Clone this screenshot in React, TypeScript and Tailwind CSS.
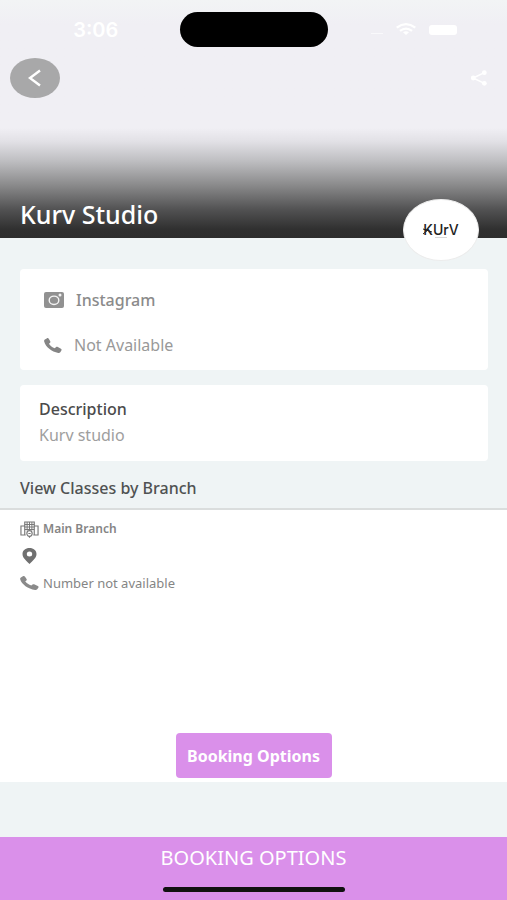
import React from "react";

type IconProps = { className?: string };

function BackIcon({ className }: IconProps) {
  return (
    <svg viewBox="0 0 14 18" className={className} fill="none" stroke="currentColor" strokeWidth="2.4" aria-hidden="true">
      <path d="M12 1.5 2 9l10 7.5" />
    </svg>
  );
}

function ShareIcon({ className }: IconProps) {
  return (
    <svg viewBox="0 0 20 18" className={className} fill="currentColor" aria-hidden="true">
      <path d="M3.5 9 16 3M3.5 9 16 15" stroke="currentColor" strokeWidth="1.6" />
      <circle cx="3.5" cy="9" r="2.700" />
      <circle cx="16" cy="3" r="2.700" />
      <circle cx="16" cy="15" r="2.700" />
    </svg>
  );
}

function WifiIcon({ className }: IconProps) {
  return (
    <svg viewBox="0 0 22 14" className={className} fill="none" stroke="currentColor" strokeWidth="2.4" aria-hidden="true">
      <path d="M1 5Q11-2.500 21 5M4.500 8.500q6.500-5 13 0" />
      <path d="m11 13-3.200-3Q11 8 14.200 10Z" fill="currentColor" stroke="none" />
    </svg>
  );
}

function CameraIcon({ className }: IconProps) {
  return (
    <svg viewBox="0 0 20 16" className={className} aria-hidden="true">
      <rect width="20" height="16" rx="2" fill="currentColor" />
      <ellipse cx="10" cy="8.300" rx="4.800" ry="4.200" fill="none" stroke="#f4f4f4" strokeWidth="1.400" />
      <circle cx="16" cy="3" r="1.500" fill="#f4f4f4" />
    </svg>
  );
}

function PhoneIcon({ className }: IconProps) {
  return (
    <svg viewBox="0 0 20 16" className={className} preserveAspectRatio="none" fill="currentColor" aria-hidden="true">
      <path d="M1 1.600 3 .400c.9-.5 1.800-.3 2.300.5l1.600 2.600c.4.700.2 1.300-.4 1.800l-1 .8c1.600 2.300 3.700 3.900 6.400 4.700l1.300-1c.7-.5 1.400-.5 2.200-.1l3.400 1.800c.8.500 1 1.200.5 1.900l-1.200 1.700c-.5.700-1.300 1-2.200.8C8.500 14.800 1.700 9.500.2 3.700c-.2-.9 0-1.600.8-2.100Z" />
    </svg>
  );
}

function BuildingIcon({ className }: IconProps) {
  return (
    <svg viewBox="0 0 20 17" className={className} preserveAspectRatio="none" fill="none" stroke="currentColor" strokeWidth="1.200" aria-hidden="true">
      <path d="M5 13.500V1h10v12.500M5 5H1v9h5M15 5h4v9h-5" />
      <path d="M7.500 1v8.500M10 1v8M12.500 1v8.500M5 3.500h10M5 6h10M5 8.500h10" strokeWidth="1" />
      <circle cx="10" cy="12.500" r="2.800" fill="#ffffff" />
      <path d="M8.800 12.500h2.400M10 15.300v1.500" />
    </svg>
  );
}

function PinIcon({ className }: IconProps) {
  return (
    <svg viewBox="0 0 14 16" className={className} fill="currentColor" aria-hidden="true">
      <path fillRule="evenodd" d="M7 0c4 0 7 2.500 7 6 0 3.800-3.500 6.500-7 10C3.500 12.500 0 9.800 0 6c0-3.500 3-6 7-6Zm0 3.500a2.700 2.500 0 1 0 0 5 2.700 2.500 0 0 0 0-5Z" />
    </svg>
  );
}

function Logo() {
  return (
    <div className="absolute top-[199px] right-7 flex h-[62px] w-[76px] items-center justify-center rounded-[50%] border border-[#ececec] bg-white">
      <span className="relative font-[Inter,sans-serif] text-sm leading-4 font-medium text-[#222222]">
        KUrV
        <svg viewBox="0 0 36 16" className="absolute inset-0 h-4 w-9" fill="none" aria-hidden="true">
          <path d="m0 7 9 3M0 12l5-4" stroke="#222222" />
          <path d="M12 15.500h12" stroke="#d8d8d8" />
        </svg>
      </span>
    </div>
  );
}

function Hero() {
  return (
    <header className="relative flex h-[238px] flex-col bg-linear-to-b from-[#f2f4f5] via-[#f0eff4] via-10% to-[#f0eff4] text-white">
      <div className="absolute inset-x-0 bottom-0 h-[110px] bg-[linear-gradient(to_bottom,#f0eff4_0%,#e2e1e6_12%,#bebec1_30%,#8a8a8b_52%,#525253_74%,#303030_92%,#2d2d2d_100%)]" />
      <div className="relative grid grid-cols-[1fr_148px_1fr] items-center pt-3">
        <time className="pl-3 text-center font-[Inter,sans-serif] text-xl leading-5 font-semibold">3:06</time>
        <div className="h-[35px] rounded-full bg-black" />
        <div className="flex items-center justify-end gap-3 pr-[50px]">
          <span className="mt-2 h-px w-3 bg-white/60" />
          <WifiIcon className="h-[13px] w-[22px]" />
          <span className="h-[10px] w-7 rounded-[3px] bg-white" />
        </div>
      </div>
      <div className="relative mt-[11px] flex items-center justify-between pr-[18px] pl-[10px]">
        <button type="button" aria-label="Back" className="flex h-10 w-[50px] items-center justify-center rounded-[50%] bg-[#a8a8a9]">
          <BackIcon className="h-[18px] w-[14px]" />
        </button>
        <button type="button" aria-label="Share">
          <ShareIcon className="h-4 w-5" />
        </button>
      </div>
      <h1 className="relative mt-auto px-5 pb-2 text-[25px] leading-8 font-medium">Kurv Studio</h1>
      <Logo />
    </header>
  );
}

export default function App() {
  return (
    <div className="flex min-h-screen flex-col bg-[#eff4f5] font-['Noto_Sans','Open_Sans',sans-serif]">
      <Hero />
      <main className="flex flex-1 flex-col">
        <div className="mt-[31px] flex flex-col gap-[15px] pr-[19px] pl-5">
          <section className="flex flex-col gap-[21px] rounded bg-white px-6 pt-[19px] pb-[13px] text-base leading-6 text-[#999999]">
            <a href="#instagram" className="flex items-center gap-3 font-medium text-[#8b8b8b]">
              <CameraIcon className="h-4 w-5 text-[#919191]" />
              Instagram
            </a>
            <p className="flex items-center gap-3">
              <PhoneIcon className="h-[15px] w-[18px] text-[#858585]" />
              Not Available
            </p>
          </section>
          <section className="rounded bg-white px-[19px] pt-[11px] pb-[13px] text-base leading-[26px]">
            <h2 className="font-medium text-[#4b4b4b]">Description</h2>
            <p className="text-[#9e9e9e]">Kurv studio</p>
          </section>
        </div>
        <h2 className="px-5 pt-[15px] pb-2 text-base leading-6 font-medium text-[#4f5252]">View Classes by Branch</h2>
        <section className="mb-[55px] flex flex-1 flex-col border-t-2 border-[#dadddd] bg-white pb-1">
          <ul className="flex flex-col gap-[7px] px-5 pt-[9px] leading-5 text-[#858585]">
            <li className="flex items-center gap-1 text-xs leading-5 font-semibold">
              <BuildingIcon className="h-[17px] w-[19px] text-[#777777]" />
              Main Branch
            </li>
            <li className="flex h-5 items-center">
              <PinIcon className="h-4 w-[19px] text-[#707070]" />
            </li>
            <li className="flex items-center gap-1 text-[13px]">
              <PhoneIcon className="h-[14px] w-[19px] text-[#8a8a8a]" />
              Number not available
            </li>
          </ul>
          <button type="button" className="mt-auto h-[45px] w-[156px] self-center rounded bg-[#da90ea] text-base font-bold text-white">
            Booking Options
          </button>
        </section>
      </main>
      <footer className="flex flex-col items-center gap-[15px] bg-[#da90ea] pt-[7px] pb-2">
        <button type="button" className="text-xl leading-7 text-white">BOOKING OPTIONS</button>
        <div className="h-[5px] w-[182px] rounded-full bg-[#111111]" />
      </footer>
    </div>
  );
}
